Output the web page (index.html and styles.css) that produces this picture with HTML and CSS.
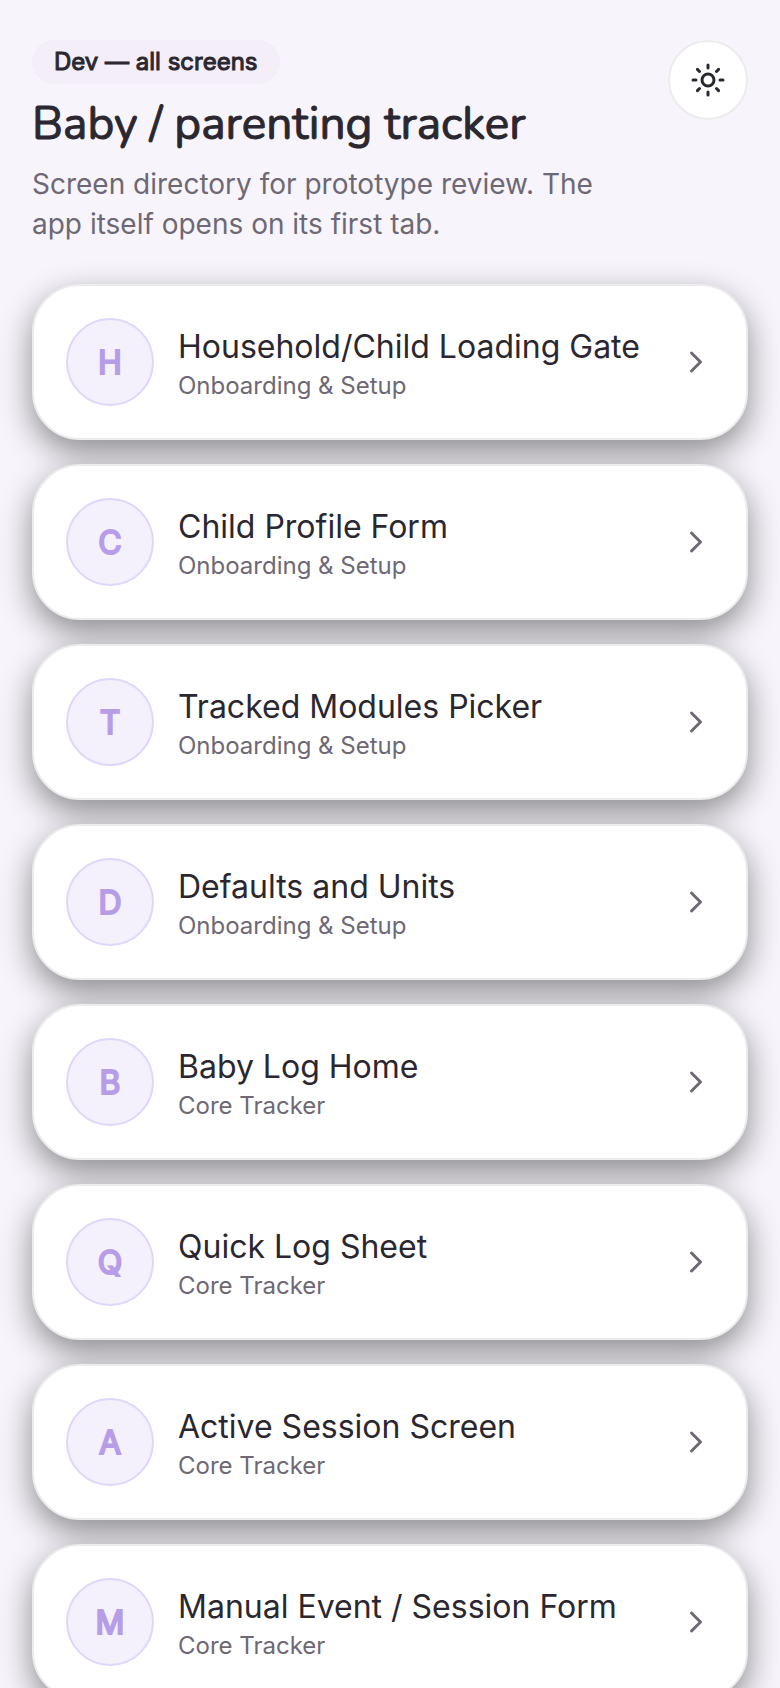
FILE: index.html
```html
<!DOCTYPE html>
<html lang="en">

<head>
    <meta charset="UTF-8">
    <meta name="viewport" content="width=device-width, initial-scale=1.0">
    <title>Baby / parenting tracker</title>
    <link rel="stylesheet" href="styles.css">
</head>

<body>
    <header class="header">
        <div class="header-text">
            <span class="badge">Dev — all screens</span>
            <h1>Baby / parenting tracker</h1>
            <p class="subtitle">Screen directory for prototype review. The app itself opens on its first tab.</p>
        </div>
        <button class="theme-button" type="button" aria-label="Toggle theme">
            <svg class="icon" viewBox="0 0 24 24">
                <circle cx="12" cy="12" r="4" />
                <path d="M12 2v2M12 20v2M4.93 4.93l1.41 1.41M17.66 17.66l1.41 1.41M2 12h2M20 12h2M6.34 17.66l-1.41 1.41M19.07 4.93l-1.41 1.41" />
            </svg>
        </button>
    </header>

    <main class="screen-list">
        <a class="card" href="#loading-gate">
            <span class="avatar">H</span>
            <span class="card-text">
                <span class="card-title">Household/Child Loading Gate</span>
                <span class="card-group">Onboarding &amp; Setup</span>
            </span>
            <svg class="icon chevron" viewBox="0 0 24 24"><path d="M9 18l6-6-6-6" /></svg>
        </a>
        <a class="card" href="#child-profile">
            <span class="avatar">C</span>
            <span class="card-text">
                <span class="card-title">Child Profile Form</span>
                <span class="card-group">Onboarding &amp; Setup</span>
            </span>
            <svg class="icon chevron" viewBox="0 0 24 24"><path d="M9 18l6-6-6-6" /></svg>
        </a>
        <a class="card" href="#modules">
            <span class="avatar">T</span>
            <span class="card-text">
                <span class="card-title">Tracked Modules Picker</span>
                <span class="card-group">Onboarding &amp; Setup</span>
            </span>
            <svg class="icon chevron" viewBox="0 0 24 24"><path d="M9 18l6-6-6-6" /></svg>
        </a>
        <a class="card" href="#defaults">
            <span class="avatar">D</span>
            <span class="card-text">
                <span class="card-title">Defaults and Units</span>
                <span class="card-group">Onboarding &amp; Setup</span>
            </span>
            <svg class="icon chevron" viewBox="0 0 24 24"><path d="M9 18l6-6-6-6" /></svg>
        </a>
        <a class="card" href="#log-home">
            <span class="avatar">B</span>
            <span class="card-text">
                <span class="card-title">Baby Log Home</span>
                <span class="card-group">Core Tracker</span>
            </span>
            <svg class="icon chevron" viewBox="0 0 24 24"><path d="M9 18l6-6-6-6" /></svg>
        </a>
        <a class="card" href="#quick-log">
            <span class="avatar">Q</span>
            <span class="card-text">
                <span class="card-title">Quick Log Sheet</span>
                <span class="card-group">Core Tracker</span>
            </span>
            <svg class="icon chevron" viewBox="0 0 24 24"><path d="M9 18l6-6-6-6" /></svg>
        </a>
        <a class="card" href="#active-session">
            <span class="avatar">A</span>
            <span class="card-text">
                <span class="card-title">Active Session Screen</span>
                <span class="card-group">Core Tracker</span>
            </span>
            <svg class="icon chevron" viewBox="0 0 24 24"><path d="M9 18l6-6-6-6" /></svg>
        </a>
        <a class="card" href="#manual-event">
            <span class="avatar">M</span>
            <span class="card-text">
                <span class="card-title">Manual Event / Session Form</span>
                <span class="card-group">Core Tracker</span>
            </span>
            <svg class="icon chevron" viewBox="0 0 24 24"><path d="M9 18l6-6-6-6" /></svg>
        </a>
    </main>
</body>

</html>
```
FILE: styles.css
```css
* {
    margin: 0;
    padding: 0;
    box-sizing: border-box;
}

body {
    font-family: Inter, sans-serif;
    background-color: #f7f5fb;
    color: #2b2730;
    padding: 40px 32px;
}

.header {
    display: flex;
    justify-content: space-between;
    align-items: flex-start;
    gap: 24px;
    margin-bottom: 40px;
}

.header-text {
    display: flex;
    flex-direction: column;
    align-items: flex-start;
    max-width: 600px;
}

.badge {
    background-color: #f3eef8;
    border-radius: 22px;
    padding: 6px 22px;
    font-size: 24px;
    line-height: 32px;
    -webkit-text-stroke: 1px currentColor;
}

h1 {
    font-family: Nunito, Lato, sans-serif;
    font-size: 46px;
    font-weight: 400;
    line-height: 56px;
    margin: 12px 0;
    -webkit-text-stroke: 1px currentColor;
}

.subtitle {
    font-size: 28px;
    line-height: 40px;
    color: #6e6875;
}

.theme-button {
    display: flex;
    justify-content: center;
    align-items: center;
    flex-shrink: 0;
    width: 80px;
    height: 80px;
    background-color: #fff;
    color: #2b2730;
    border: 2px solid #ececec;
    border-radius: 50%;
    cursor: pointer;
}

.icon {
    flex-shrink: 0;
    width: 36px;
    height: 36px;
    fill: none;
    stroke: currentColor;
    stroke-width: 2;
    stroke-linecap: round;
    stroke-linejoin: round;
}

.screen-list {
    display: flex;
    flex-direction: column;
    gap: 24px;
}

.card {
    display: flex;
    align-items: center;
    gap: 24px;
    padding: 32px;
    background-color: #fff;
    color: #2b2730;
    border: 2px solid #ececec;
    border-radius: 48px;
    box-shadow: 0 12px 32px rgba(0, 0, 0, 0.44);
    text-decoration: none;
}

.avatar {
    display: flex;
    justify-content: center;
    align-items: center;
    flex-shrink: 0;
    width: 88px;
    height: 88px;
    background-color: #f4f0fc;
    border: 2px solid #e0d6f8;
    border-radius: 50%;
    color: #b79ce8;
    font-size: 32px;
    -webkit-text-stroke: 2px currentColor;
}

.card-text {
    display: flex;
    flex-direction: column;
    flex: 1;
    gap: 1px;
    min-width: 0;
    padding-top: 3px;
}

.card-title {
    font-size: 32px;
    line-height: 44px;
}

.card-group {
    font-size: 24px;
    line-height: 32px;
    color: #6e6875;
}

.chevron {
    color: #6e6875;
}
```
